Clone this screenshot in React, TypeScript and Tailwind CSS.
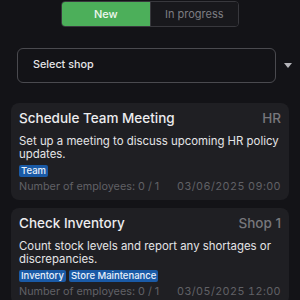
import React from "react";

type Task = {
  title: string;
  shop: string;
  description: string;
  tags: string[];
  employees: string;
  date: string;
};

const tasks: Task[] = [
  {
    title: "Schedule Team Meeting",
    shop: "HR",
    description: "Set up a meeting to discuss upcoming HR policy updates.",
    tags: ["Team"],
    employees: "0 / 1",
    date: "03/06/2025 09:00",
  },
  {
    title: "Check Inventory",
    shop: "Shop 1",
    description: "Count stock levels and report any shortages or discrepancies.",
    tags: ["Inventory", "Store Maintenance"],
    employees: "0 / 1",
    date: "03/05/2025 12:00",
  },
];

function TaskCard({ task }: { task: Task }) {
  return (
    <div className="rounded-lg bg-[#1f1f23] px-2 pt-[6px] pb-[6px]">
      <div className="flex items-center justify-between">
        <span className="text-[13.5px] leading-[18px] font-medium text-[#ececef]">{task.title}</span>
        <span className="text-[13.5px] leading-[18px] font-medium text-[#77777c]">{task.shop}</span>
      </div>
      <p className="mt-[8px] text-[11.4px] leading-[13px] text-[#e4e4e7]">{task.description}</p>
      <div className="mt-[4px] flex gap-[3px]">
        {task.tags.map((t) => (
          <span
            key={t}
            className="rounded-[2px] bg-[#1a5aa6] px-[2px] text-[9.5px] leading-[12px] font-medium text-[#e8f0fb]"
          >
            {t}
          </span>
        ))}
      </div>
      <div className="mt-[3px] flex items-center justify-between text-[10.8px] leading-[14px] text-[#616166]">
        <span>Number of employees: {task.employees}</span>
        <span className="tabular-nums tracking-[0.4px]">{task.date}</span>
      </div>
    </div>
  );
}

export default function App() {
  return (
    <div
      className="min-h-screen bg-[#131317] pt-[1px]"
      style={{ fontFamily: "Inter, 'Noto Sans', sans-serif" }}
    >
      {/* status toggle */}
      <div className="flex justify-center">
        <div className="flex h-[26px] w-[178px] overflow-hidden rounded-[4px] border border-[#38383d]">
          <button className="flex-1 bg-[#4caf5a] text-[11px] font-medium text-[#eef7ee]">New</button>
          <button className="flex-1 border-l border-[#38383d] bg-[#18181c] text-[11px] text-[#7d7d82]">
            In progress
          </button>
        </div>
      </div>

      {/* shop select */}
      <div className="mt-[21px] flex items-center pl-[17px]">
        <div className="flex h-[35px] w-[259px] items-center rounded-[6px] border border-[#4a4a4f] px-[15px] text-[10.8px] font-medium text-[#e6e6e9]">
          Select shop
        </div>
        <div className="flex flex-1 justify-center">
          <svg width="8" height="5" viewBox="0 0 8 5">
            <path d="M0 0 H8 L4 5 Z" fill="#b5b5ba" />
          </svg>
        </div>
      </div>

      <div className="mt-[20px] flex flex-col gap-2 px-[11px]">
        {tasks.map((t) => (
          <TaskCard key={t.title} task={t} />
        ))}
      </div>
    </div>
  );
}
